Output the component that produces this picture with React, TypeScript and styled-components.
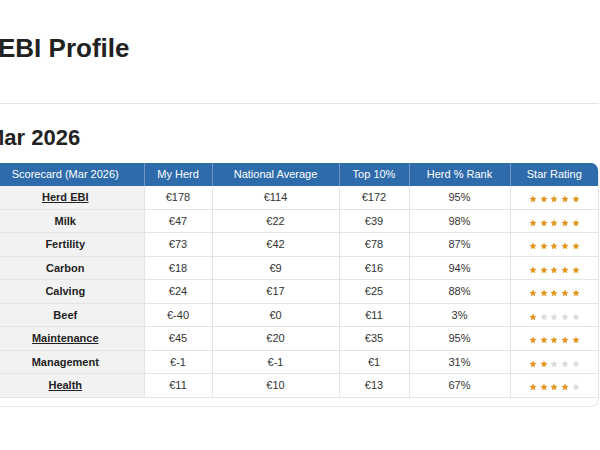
import React from "react";
import styled, { createGlobalStyle } from "styled-components";

const GlobalStyle = createGlobalStyle`
  html, body { margin: 0; padding: 0; background: #ffffff; }
  body { overflow: hidden; font-family: "Liberation Sans", Arial, sans-serif; color: #222; }
`;

const Page = styled.div`
  margin-left: -14px;
  margin-right: 1px;
  padding-top: 33px;
`;

const Title = styled.h1`
  margin: 0;
  padding-left: 12px;
  font-size: 26px;
  line-height: 30px;
  font-weight: 700;
  color: #222;
`;

const Rule = styled.hr`
  margin: 40px 0 0 0;
  border: 0;
  border-top: 1px solid #e2e2e2;
  height: 0;
`;

const Subtitle = styled.h2`
  margin: 21px 0 0 0;
  font-size: 22px;
  line-height: 25px;
  font-weight: 700;
  color: #222;
`;

const Card = styled.div`
  margin-top: 13px;
  border: 1px solid #e6e6e6;
  border-top: 0;
  border-radius: 8px;
  overflow: hidden;
  padding-bottom: 8px;
`;

const Table = styled.table`
  width: 100%;
  border-collapse: collapse;
  table-layout: fixed;
  font-size: 11px;
`;

const Th = styled.th`
  background: #2e6bab;
  color: #ffffff;
  font-weight: 400;
  padding: 5px 4px;
  line-height: 13px;
  text-align: center;
  border-left: 1px solid #6e98c6;
  white-space: nowrap;
  &:first-child { border-left: 0; }
`;

const Td = styled.td<{ $label?: boolean }>`
  padding: 5px 4px;
  line-height: 12.5px;
  text-align: center;
  border-bottom: 1px solid #e4e4e4;
  border-left: 1px solid #e4e4e4;
  color: ${(p) => (p.$label ? "#222" : "#333")};
  font-weight: ${(p) => (p.$label ? 700 : 400)};
  background: ${(p) => (p.$label ? "#f2f2f2" : "#ffffff")};
  &:first-child { border-left: 0; }
`;

const LinkLabel = styled.span`
  text-decoration: underline;
  text-underline-offset: 1px;
`;

const Stars = styled.span`
  display: inline-flex;
  gap: 2.7px;
  vertical-align: middle;
  margin-top: 2px;
`;

const StarSvg = styled.svg<{ $on: boolean }>`
  width: 8px;
  height: 8px;
  fill: ${(p) => (p.$on ? "#e3961f" : "#dadada")};
`;

const Star = ({ on }: { on: boolean }) => (
  <StarSvg $on={on} viewBox="0 0 24 24">
    <path d="M12 1.5l3.1 7.1 7.7.6-5.9 5 1.8 7.5L12 17.7l-6.7 4 1.8-7.5-5.9-5 7.7-.6z" />
  </StarSvg>
);

type Row = { label: string; link?: boolean; mine: string; nat: string; top: string; rank: string; stars: number };

const rows: Row[] = [
  { label: "Herd EBI", link: true, mine: "€178", nat: "€114", top: "€172", rank: "95%", stars: 5 },
  { label: "Milk", mine: "€47", nat: "€22", top: "€39", rank: "98%", stars: 5 },
  { label: "Fertility", mine: "€73", nat: "€42", top: "€78", rank: "87%", stars: 5 },
  { label: "Carbon", mine: "€18", nat: "€9", top: "€16", rank: "94%", stars: 5 },
  { label: "Calving", mine: "€24", nat: "€17", top: "€25", rank: "88%", stars: 5 },
  { label: "Beef", mine: "€-40", nat: "€0", top: "€11", rank: "3%", stars: 1 },
  { label: "Maintenance", link: true, mine: "€45", nat: "€20", top: "€35", rank: "95%", stars: 5 },
  { label: "Management", mine: "€-1", nat: "€-1", top: "€1", rank: "31%", stars: 2 },
  { label: "Health", link: true, mine: "€11", nat: "€10", top: "€13", rank: "67%", stars: 4 },
];

export default function App() {
  return (
    <>
      <GlobalStyle />
      <Page>
        <Title>EBI Profile</Title>
        <Rule />
        <Subtitle>Mar 2026</Subtitle>
        <Card>
          <Table>
            <colgroup>
              <col style={{ width: 157 }} />
              <col style={{ width: 68 }} />
              <col style={{ width: 127 }} />
              <col style={{ width: 70 }} />
              <col style={{ width: 101 }} />
              <col />
            </colgroup>
            <thead>
              <tr>
                <Th>Scorecard (Mar 2026)</Th>
                <Th>My Herd</Th>
                <Th>National Average</Th>
                <Th>Top 10%</Th>
                <Th>Herd % Rank</Th>
                <Th>Star Rating</Th>
              </tr>
            </thead>
            <tbody>
              {rows.map((r) => (
                <tr key={r.label}>
                  <Td $label>{r.link ? <LinkLabel>{r.label}</LinkLabel> : r.label}</Td>
                  <Td>{r.mine}</Td>
                  <Td>{r.nat}</Td>
                  <Td>{r.top}</Td>
                  <Td>{r.rank}</Td>
                  <Td>
                    <Stars>
                      {[0, 1, 2, 3, 4].map((i) => (
                        <Star key={i} on={i < r.stars} />
                      ))}
                    </Stars>
                  </Td>
                </tr>
              ))}
            </tbody>
          </Table>
        </Card>
      </Page>
    </>
  );
}
